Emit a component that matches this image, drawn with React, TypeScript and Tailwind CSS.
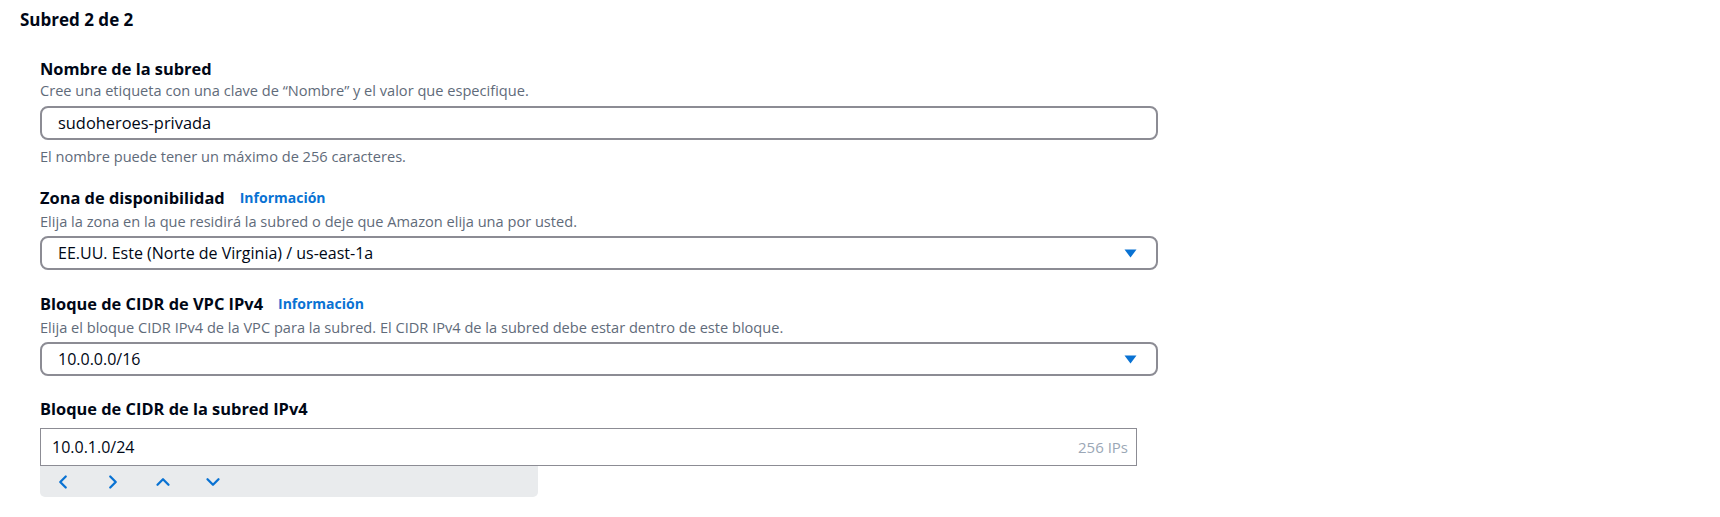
import { ChevronLeft, ChevronRight, ChevronUp, ChevronDown } from "lucide-react";

const font = { fontFamily: '"Open Sans", "Noto Sans", sans-serif' };

function Caret() {
  return (
    <svg width="13" height="9" viewBox="0 0 13 9" className="shrink-0">
      <path d="M0.5 0.5 L12.5 0.5 L6.5 8.5 Z" fill="#0972d3" />
    </svg>
  );
}

function Label({ text, info }: { text: string; info?: boolean }) {
  return (
    <div className="flex items-center gap-[15px] leading-[22px]">
      <span className="text-[16.4px] font-bold text-[#000716]">{text}</span>
      {info && (
        <span className="text-[14px] font-bold text-[#0972d3]">Información</span>
      )}
    </div>
  );
}

function Hint({ text }: { text: string }) {
  return <p className="text-[14.6px] leading-[20px] text-[#5f6b7a]">{text}</p>;
}

function Select({ value }: { value: string }) {
  return (
    <div className="mt-[5px] flex h-[34px] w-[1118px] items-center justify-between rounded-[8px] border-2 border-[#8c8c94] pl-[16px] pr-[19px]">
      <span className="text-[16px] text-[#000716]">{value}</span>
      <Caret />
    </div>
  );
}

export default function App() {
  return (
    <div className="min-h-screen w-full bg-white" style={font}>
      <div className="px-[20px] pt-[10px]">
        <h2 className="text-[17px] font-bold leading-[20px] text-[#000716]">Subred 2 de 2</h2>

        <div className="mt-[28px] flex flex-col pl-[20px]">
          <Label text="Nombre de la subred" />
          <Hint text="Cree una etiqueta con una clave de “Nombre” y el valor que especifique." />
          <div className="mt-[6px] flex h-[34px] w-[1118px] items-center rounded-[8px] border-2 border-[#8c8c94] px-[16px]">
            <span className="text-[16.4px] text-[#000716]">sudoheroes-privada</span>
          </div>
          <p className="mt-[6px] text-[14.6px] leading-[20px] text-[#5f6b7a]">
            El nombre puede tener un máximo de 256 caracteres.
          </p>

          <div className="mt-[21px]">
            <Label text="Zona de disponibilidad" info />
          </div>
          <div className="mt-[2px]">
            <Hint text="Elija la zona en la que residirá la subred o deje que Amazon elija una por usted." />
          </div>
          <Select value="EE.UU. Este (Norte de Virginia) / us-east-1a" />

          <div className="mt-[23px]">
            <Label text="Bloque de CIDR de VPC IPv4" info />
          </div>
          <div className="mt-[2px]">
            <Hint text="Elija el bloque CIDR IPv4 de la VPC para la subred. El CIDR IPv4 de la subred debe estar dentro de este bloque." />
          </div>
          <Select value="10.0.0.0/16" />

          <div className="mt-[22px]">
            <Label text="Bloque de CIDR de la subred IPv4" />
          </div>
          <div className="mt-[8px] flex h-[38px] w-[1097px] items-center justify-between border border-[#8c8c94] bg-white pl-[11px] pr-[8px]">
            <span className="text-[16px] text-[#000716]">10.0.1.0/24</span>
            <span className="text-[15px] text-[#9ba7b6]">256 IPs</span>
          </div>
          <div className="flex h-[31px] w-[498px] items-center gap-[28px] rounded-b-[5px] bg-[#e9ebed] pl-[12px] text-[#0972d3]">
            <ChevronLeft size={22} strokeWidth={2.5} />
            <ChevronRight size={22} strokeWidth={2.5} />
            <ChevronUp size={22} strokeWidth={2.5} />
            <ChevronDown size={22} strokeWidth={2.5} />
          </div>
        </div>
      </div>
    </div>
  );
}
